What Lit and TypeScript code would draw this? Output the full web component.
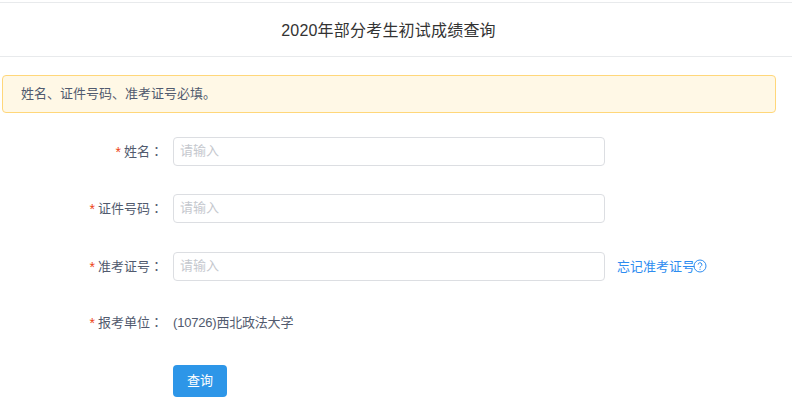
import { LitElement, html, css } from "lit";
import { customElement } from "lit/decorators.js";

@customElement("app-root")
export class AppRoot extends LitElement {
  static styles = css`
    :host { display: block; width: 792px; height: 414px; overflow: hidden; background: #fff; font-family: "Liberation Sans", "Noto Sans CJK SC", sans-serif; color: #515a6e; font-size: 13px; }
    .page { padding-top: 2px; }
    .head { box-sizing: content-box; height: 51px; padding: 0 15px 2px 0; border-top: 1px solid #e8eaec; border-bottom: 1px solid #e8eaec; display: flex; align-items: center; justify-content: center; font-size: 16px; letter-spacing: 0.2px; color: #333; }
    .alert { box-sizing: border-box; margin: 18px 16px 0 2px; height: 38px; border: 1px solid #ffd77a; border-radius: 4px; background: #fff8e6; padding: 0 0 3px 18px; display: flex; align-items: center; }
    .form { margin-top: 24px; display: flex; flex-direction: column; }
    .row { display: flex; align-items: center; height: 29px; }
    .r1 { margin-bottom: 28px; }
    .r2 { margin-bottom: 29px; }
    .r3 { margin-bottom: 27px; }
    .r4 { margin-bottom: 28px; }
    .label { box-sizing: border-box; width: 173px; padding: 0 10px 2px 0; display: flex; justify-content: flex-end; align-items: center; white-space: nowrap; }
    .colon { font-family: "Noto Sans CJK TC", sans-serif; }
    .star { color: #ed3f14; margin-right: 3px; padding-top: 2px; font-size: 14px; }
    .input { box-sizing: border-box; width: 432px; height: 29px; border: 1px solid #dcdee2; border-radius: 4px; padding: 0 6px 2px; font: inherit; color: #515a6e; outline: none; background: #fff; }
    .input::placeholder { color: #c5c8ce; }
    .value { padding-bottom: 2px; letter-spacing: -0.2px; }
    .forgot { margin-left: 12px; padding-bottom: 2px; color: #2d8cf0; display: flex; align-items: center; text-decoration: none; }
    .forgot svg { margin-left: -2px; }
    .btn { margin-left: 173px; width: 54px; height: 32px; border: 0; border-radius: 4px; background: #2d96e8; color: #fff; font: inherit; padding: 0 0 4px; }
  `;

  private label(text: string) {
    return html`<label class="label"><span class="star">*</span>${text}<span class="colon">：</span></label>`;
  }

  render() {
    return html`<div class="page">
      <div class="head">2020年部分考生初试成绩查询</div>
      <div class="alert">姓名、证件号码、准考证号必填。</div>
      <div class="form">
        <div class="row r1">${this.label("姓名")}<input class="input" placeholder="请输入" /></div>
        <div class="row r2">${this.label("证件号码")}<input class="input" placeholder="请输入" /></div>
        <div class="row r3">${this.label("准考证号")}<input class="input" placeholder="请输入" />
          <a class="forgot">忘记准考证号<svg width="14" height="14" viewBox="0 0 14 14" fill="none" stroke="#2d8cf0"><circle cx="7" cy="7" r="6"/><path d="M5.1 5.6a1.9 1.9 0 1 1 2.8 1.7c-.6.3-.9.7-.9 1.4"/><path d="M7 9.8v1.1"/></svg></a>
        </div>
        <div class="row r4">${this.label("报考单位")}<span class="value">(10726)西北政法大学</span></div>
        <div><button class="btn">查询</button></div>
      </div>
    </div>`;
  }
}
